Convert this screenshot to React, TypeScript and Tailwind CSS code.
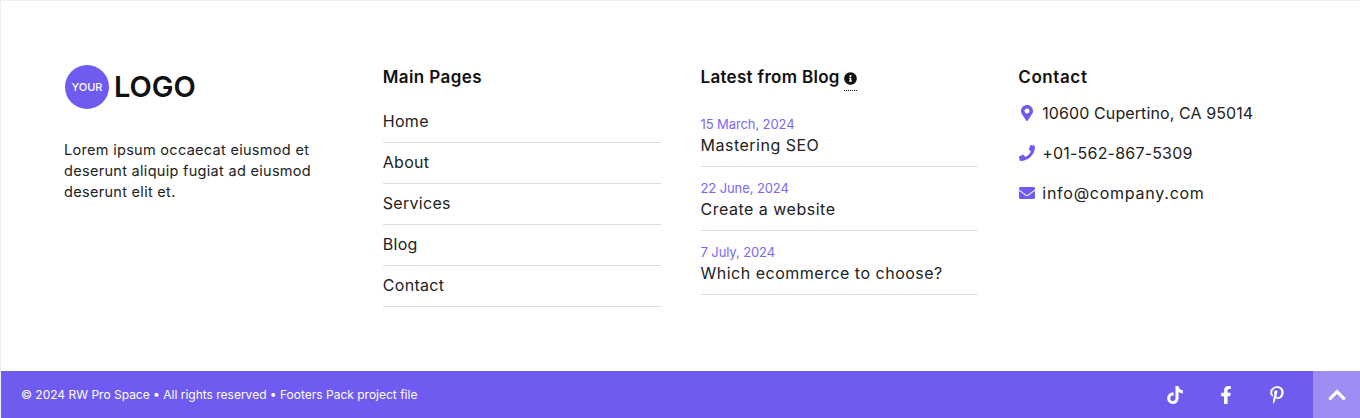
import { FC } from 'react';
import { FaChevronUp, FaEnvelope, FaFacebookF, FaInfoCircle, FaMapMarkerAlt, FaPhoneAlt, FaPinterestP, FaTiktok } from 'react-icons/fa';

const pages = ['Home', 'About', 'Services', 'Blog', 'Contact'];

const posts = [
  { date: '15 March, 2024', title: 'Mastering SEO' },
  { date: '22 June, 2024', title: 'Create a website' },
  { date: '7 July, 2024', title: 'Which ecommerce to choose?' },
];

const App: FC = () => {
  return (
    <div className="flex h-[418px] flex-col border-t border-l border-[#eeeeee] bg-white font-['Inter',sans-serif] text-[#222222]">
      <div className="grid flex-1 grid-cols-4 gap-10 px-16 pt-16">
        <div>
          <div className="flex items-center gap-[5px]">
            <div className="flex h-11 w-11 items-center justify-center rounded-full bg-[#6f5bf0] text-[11px] font-medium text-white">YOUR</div>
            <span className="text-[29px] font-semibold text-[#111111]">LOGO</span>
          </div>
          <p className="mt-[30px] -ml-px text-[14.5px] leading-[21px] tracking-[0.3px]">
            Lorem ipsum occaecat eiusmod et
            <br />
            deserunt aliquip fugiat ad eiusmod
            <br />
            deserunt elit et.
          </p>
        </div>

        <div>
          <h3 className="text-[17px] leading-6 font-semibold tracking-[0.4px] text-[#111111]">Main Pages</h3>
          <ul className="mt-[13px]">
            {pages.map((page) => (
              <li key={page} className="flex h-[41px] items-center border-b border-[#dddddd] pb-[2px] text-[16px] tracking-[0.3px]">{page}</li>
            ))}
          </ul>
        </div>

        <div>
          <h3 className="flex h-6 items-start gap-[4px] text-[17px] leading-6 font-semibold tracking-[0.3px] text-[#111111]">
            Latest from Blog
            <span className="flex h-[26px] items-center border-b border-dotted border-[#111111] pt-[2px]"><FaInfoCircle className="h-[13px] w-[13px]" /></span>
          </h3>
          <ul className="mt-[27px]">
            {posts.map((post) => (
              <li key={post.title} className="mb-[13px] h-[51px] border-b border-[#dddddd]">
                <div className="text-[13px] leading-[17px] tracking-[-0.1px] text-[#7a66f5]">{post.date}</div>
                <div className="text-[16px] leading-6 tracking-[0.5px]">{post.title}</div>
              </li>
            ))}
          </ul>
        </div>

        <div>
          <h3 className="text-[17px] leading-6 font-semibold tracking-[0.6px] text-[#111111]">Contact</h3>
          <ul className="mt-[12px] flex flex-col gap-4 text-[16px]">
            <li className="flex h-6 items-center gap-[9px] tracking-[0.1px]"><FaMapMarkerAlt className="ml-[3px] h-4 w-3 text-[#6f5bf0]" />10600 Cupertino, CA 95014</li>
            <li className="flex h-6 items-center gap-[7px] tracking-[0.2px]"><FaPhoneAlt className="ml-px h-4 w-4 -scale-x-100 text-[#6f5bf0]" />+01-562-867-5309</li>
            <li className="flex h-6 items-center gap-[7px] tracking-[0.75px]"><FaEnvelope className="ml-px h-4 w-4 text-[#6f5bf0]" />info@company.com</li>
          </ul>
        </div>
      </div>

      <div className="flex h-[47px] items-center bg-[#6f5bf0] pl-5 text-white">
        <span className="text-[12px]">© 2024 RW Pro Space • All rights reserved • Footers Pack project file</span>
        <div className="ml-auto flex items-center gap-[33px] pr-[27px]">
          <FaTiktok className="h-[18px] w-[18px]" />
          <FaFacebookF className="h-[18px] w-[18px]" />
          <FaPinterestP className="h-[18px] w-[18px]" />
        </div>
        <div className="flex h-full w-[47px] items-center justify-center bg-[#9d8df3]"><FaChevronUp className="h-5 w-5" /></div>
      </div>
    </div>
  );
};

export default App;
